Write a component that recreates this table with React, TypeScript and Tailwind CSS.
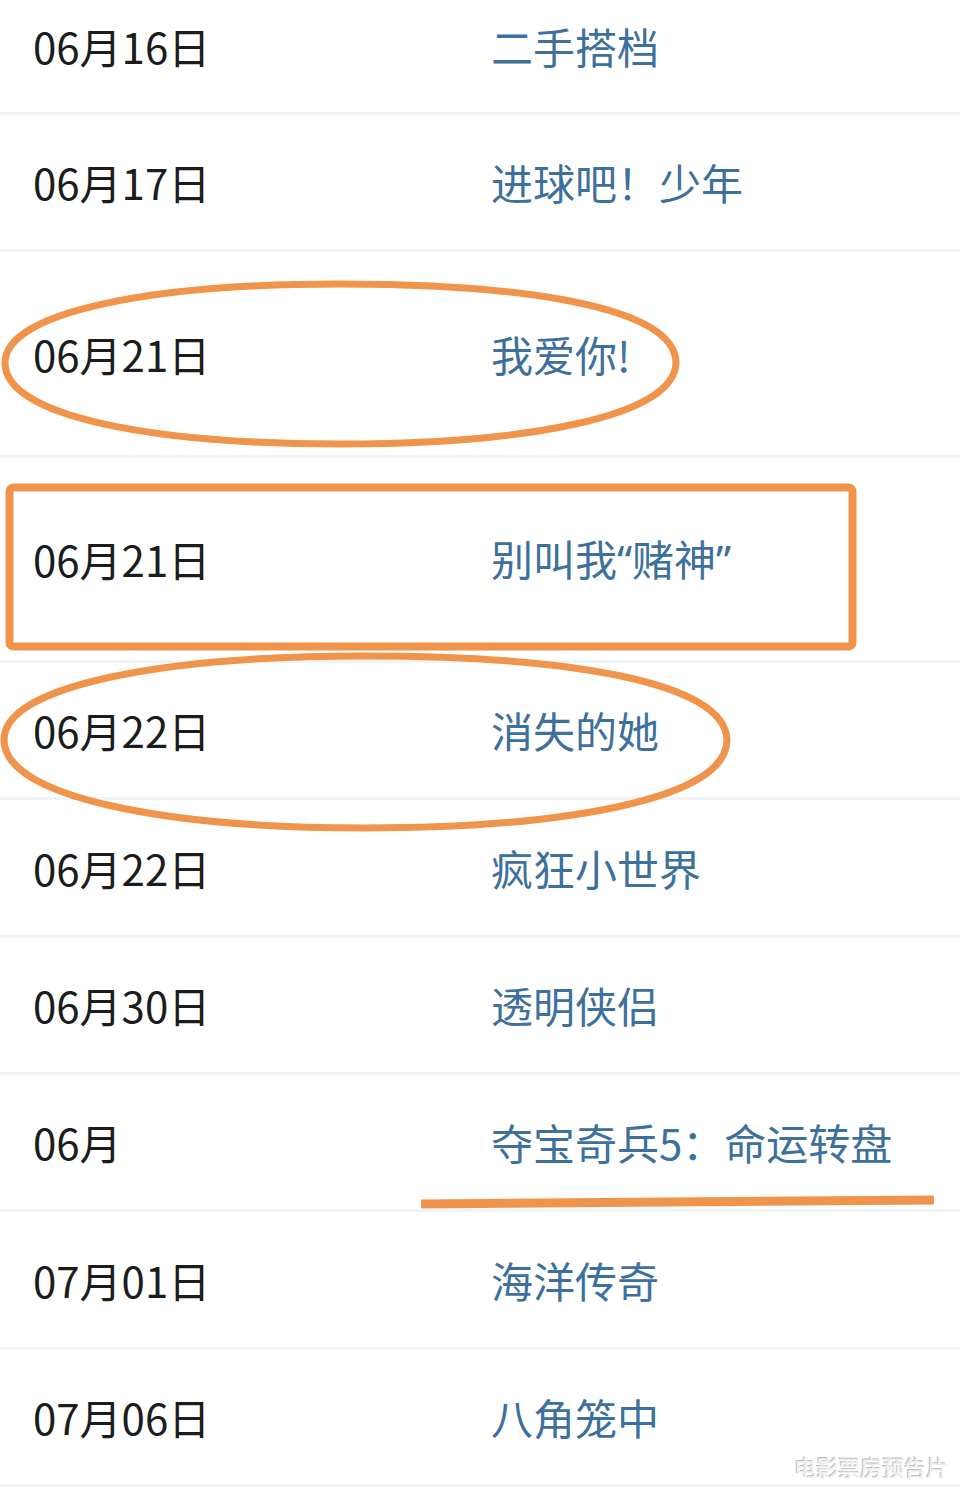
import type { ReactNode } from "react";

const q = (s: string) => <span style={{ fontFamily: '"Noto Sans", sans-serif' }}>{s}</span>;

const rows: { date: string; title: ReactNode; h: string }[] = [
  { date: "06月16日", title: "二手搭档", h: "h-[115px] pb-[20px]" },
  { date: "06月17日", title: "进球吧！少年", h: "h-[137px]" },
  { date: "06月21日", title: "我爱你!", h: "h-[206px]" },
  { date: "06月21日", title: <>别叫我{q("“")}赌神{q("”")}</>, h: "h-[205px]" },
  { date: "06月22日", title: "消失的她", h: "h-[137px]" },
  { date: "06月22日", title: "疯狂小世界", h: "h-[138px]" },
  { date: "06月30日", title: "透明侠侣", h: "h-[137px]" },
  { date: "06月", title: "夺宝奇兵5：命运转盘", h: "h-[137px]" },
  { date: "07月01日", title: "海洋传奇", h: "h-[138px]" },
  { date: "07月06日", title: "八角笼中", h: "h-[137px]" },
];

function Marks() {
  return (
    <svg
      className="pointer-events-none absolute left-0 top-0"
      width="960"
      height="1493"
      viewBox="0 0 960 1493"
      fill="none"
      stroke="#f0944c"
    >
      {/* 我爱你 */}
      <path
        strokeWidth="7"
        d="M676 362 C674 306 520 284 340 284 C150 284 5 312 5 363 C5 416 150 444 340 444 C520 444 676 418 676 362 Z"
      />
      {/* 赌神 */}
      <rect x="9.5" y="487.5" width="843" height="159" rx="4" strokeWidth="8" />
      {/* 消失的她 */}
      <path
        strokeWidth="7"
        d="M727 740 C725 680 560 656 365 656 C160 656 4 686 4 740 C4 796 160 828 365 828 C560 828 727 800 727 740 Z"
      />
      {/* 夺宝奇兵 */}
      <path strokeWidth="9" d="M421 1204 L934 1200" />
    </svg>
  );
}

export default function App() {
  return (
    <div
      className="relative h-[1493px] w-[960px] overflow-hidden bg-white"
      style={{ fontFamily: '"Noto Sans CJK SC", "Noto Sans", sans-serif' }}
    >
      <div className="flex flex-col">
        {rows.map((r, i) => (
          <div
            key={i}
            className={`grid grid-cols-[458px_1fr] items-center border-b-[3px] border-[#f2f3f4] pl-[33px] ${r.h}`}
          >
            <div className="text-[42px] leading-none text-[#1c1c1c]">{r.date}</div>
            <div className="text-[42px] leading-none whitespace-nowrap text-[#3d709c]">{r.title}</div>
          </div>
        ))}
      </div>

      <Marks />

      <div className="absolute right-[12px] top-[1455px] text-[22px] leading-none text-[#ececec] [text-shadow:1px_1px_0_#ffffff,-1px_-1px_0_#bdbdbd]">
        电影票房预告片
      </div>
    </div>
  );
}
